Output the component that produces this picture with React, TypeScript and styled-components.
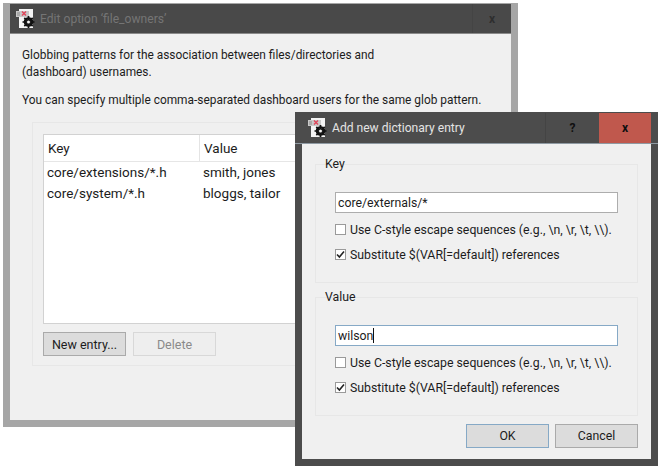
import React from "react";
import styled, { createGlobalStyle } from "styled-components";

const Global = createGlobalStyle`
  html, body { margin: 0; padding: 0; background: #fff; }
  body { width: 662px; height: 468px; overflow: hidden; font-family: Roboto, "Noto Sans", sans-serif; font-size: 12.5px; color: #1c1c1c; }
  #root { position: relative; width: 662px; height: 468px; }
`;

const Window = styled.section<{ $active?: boolean }>`
  position: absolute;
  box-sizing: border-box;
  display: flex;
  flex-direction: column;
  background: #f0f0f0;
  left: ${p => (p.$active ? 295 : 3)}px;
  top: ${p => (p.$active ? 112 : 3)}px;
  width: ${p => (p.$active ? 363 : 515)}px;
  height: ${p => (p.$active ? 354 : 424)}px;
  border: 7px solid ${p => (p.$active ? "#4c4c4c" : "#a6a6a6")};
  border-top-width: 1px;
`;

const TitleBar = styled.header<{ $active?: boolean }>`
  display: flex;
  align-items: center;
  flex: none;
  height: ${p => (p.$active ? 31 : 30)}px;
  margin: 0 ${p => (p.$active ? -7 : 0)}px;
  padding: 0 ${p => (p.$active ? 7 : 0)}px 0 ${p => (p.$active ? 12 : 5)}px;
  background: ${p => (p.$active ? "#4c4c4c" : "#494949")};
  border-bottom: 1px solid ${p => (p.$active ? "#8f9aa3" : "#8a8a8a")};
  box-sizing: border-box;
`;

const TitleText = styled.span<{ $active?: boolean }>`
  flex: 1;
  margin-left: 3px;
  font-size: 12.1px;
  color: ${p => (p.$active ? "#e4e4e4" : "#757575")};
`;

const TitleButton = styled.div<{ $close?: boolean; $dim?: boolean }>`
  width: ${p => (p.$close ? 52 : p.$dim ? 39 : 54)}px;
  height: 100%;
  display: flex;
  align-items: center;
  justify-content: center;
  font-weight: 700;
  font-size: 12px;
  color: ${p => (p.$dim ? "#2e2e2e" : "#0f0f0f")};
  background: ${p => (p.$close ? "#c0584d" : "transparent")};
  border-left: ${p => (p.$close ? "none" : "1px solid #444")};
  box-sizing: border-box;
`;

const BackBody = styled.div`
  flex: 1;
  padding: 13px 12px 0;
  line-height: 17px;
`;

const Para = styled.p`
  margin: 0 0 11px;
  font-size: 11.9px;
  white-space: pre-line;
`;

const ListGroup = styled.div`
  margin: 13px 0 0 10px;
  height: 244px;
  box-sizing: border-box;
  border: 1px solid #e7e7e7;
  padding: 11px 10px 0;
`;

const Table = styled.div`
  height: 190px;
  box-sizing: border-box;
  background: #fff;
  border: 1px solid #d2d2d2;
  border-width: 1px 0 1px 1px;
  font-size: 13.5px;
`;

const HeaderRow = styled.div`
  display: grid;
  grid-template-columns: 156px 1fr;
  height: 27px;
  align-items: center;
  border-bottom: 1px solid #e6e6e6;
  box-sizing: border-box;
`;

const HeaderCell = styled.div<{ $first?: boolean }>`
  height: 100%;
  display: flex;
  align-items: center;
  padding-left: 4px;
  border-right: ${p => (p.$first ? "1px solid #e4e4e4" : "none")};
  box-sizing: border-box;
`;

const Row = styled.div`
  display: grid;
  grid-template-columns: 156px 1fr;
  height: 21px;
  align-items: center;
  &:first-of-type { margin-top: 3px; }
`;

const Cell = styled.div`
  padding-left: 3px;
`;

const ButtonRow = styled.div`
  display: flex;
  gap: 7px;
  margin-top: 8px;
`;

const Button = styled.button<{ $focus?: boolean; $disabled?: boolean }>`
  width: 83px;
  height: 24px;
  padding: 0;
  font: inherit;
  background: ${p => (p.$disabled ? "#eeeeee" : "#dcdcdc")};
  color: ${p => (p.$disabled ? "#8a8a8a" : "#1c1c1c")};
  border: 1px solid ${p => (p.$focus ? "#86a9c6" : p.$disabled ? "#d8d8d8" : "#aaaaaa")};
  box-sizing: border-box;
`;

const FrontBody = styled.div`
  flex: 1;
  display: flex;
  flex-direction: column;
  padding: 20px 13px 0;
  font-size: 12.3px;
`;

const Group = styled.div`
  box-sizing: border-box;
  height: 119px;
  border: 1px solid #e7e7e7;
  padding: 0 19px;
  & + & { margin-top: 14px; }
`;

const Legend = styled.div`
  height: 17px;
  line-height: 17px;
  margin: -9px 0 0 -10px;
`;

const Input = styled.div<{ $focus?: boolean }>`
  display: flex;
  align-items: center;
  box-sizing: border-box;
  height: 21px;
  margin: 19px 0 8px;
  padding-left: 2px;
  background: #fff;
  border: 1px solid ${p => (p.$focus ? "#86a9c6" : "#adadad")};
`;

const Caret = styled.span`
  width: 1px;
  height: 15px;
  background: #111;
`;

const CheckRow = styled.div`
  display: flex;
  align-items: center;
  height: 17px;
  gap: 4px;
  margin-bottom: 8px;
  white-space: nowrap;
`;

const Box = styled.span`
  width: 11px;
  height: 11px;
  flex: none;
  box-sizing: border-box;
  background: #fff;
  border: 1px solid #9a9a9a;
  display: flex;
  align-items: center;
  justify-content: center;
`;

const Actions = styled.div`
  display: flex;
  justify-content: flex-end;
  gap: 6px;
  margin-top: 8px;
`;

const AppIcon = () => (
  <svg width="22" height="22" viewBox="0 0 22 22" style={{ flex: "none" }}>
    <rect x="4" y="1" width="14" height="19" fill="#f4f4f4" />
    <rect x="1" y="3" width="13" height="6" fill="#c9c9c9" />
    <path d="M7 3.5l4 4M11 3.5l-4 4" stroke="#e0455a" strokeWidth="1.4" />
    <path d="M2 5h3M2 7h3" stroke="#8a8a8a" strokeWidth="1" />
    <g transform="translate(13.5 14)">
      <circle r="3.6" fill="none" stroke="#111" strokeWidth="2.4" />
      <path
        d="M0-6V6M-6 0H6M-4.2-4.2L4.2 4.2M-4.2 4.2L4.2-4.2"
        stroke="#111"
        strokeWidth="1.7"
      />
      <circle r="1.5" fill="#f4f4f4" />
    </g>
  </svg>
);

const Check = () => (
  <svg width="9" height="9" viewBox="0 0 9 9">
    <path d="M1 4.5L3.4 7L8 1.5" fill="none" stroke="#222" strokeWidth="1.6" />
  </svg>
);

const Escape = "Use C-style escape sequences (e.g., \\n, \\r, \\t, \\\\).";
const Subst = "Substitute $(VAR[=default]) references";

const Options = () => (
  <>
    <CheckRow>
      <Box />
      {Escape}
    </CheckRow>
    <CheckRow>
      <Box>
        <Check />
      </Box>
      {Subst}
    </CheckRow>
  </>
);

export default function App() {
  return (
    <>
      <Global />
      <Window>
        <TitleBar>
          <AppIcon />
          <TitleText>Edit option ‘file_owners’</TitleText>
          <TitleButton $dim>x</TitleButton>
        </TitleBar>
        <BackBody>
          <Para>{"Globbing patterns for the association between files/directories and\n(dashboard) usernames."}</Para>
          <Para>You can specify multiple comma-separated dashboard users for the same glob pattern.</Para>
          <ListGroup>
            <Table>
              <HeaderRow>
                <HeaderCell $first>Key</HeaderCell>
                <HeaderCell>Value</HeaderCell>
              </HeaderRow>
              <Row>
                <Cell>core/extensions/*.h</Cell>
                <Cell>smith, jones</Cell>
              </Row>
              <Row>
                <Cell>core/system/*.h</Cell>
                <Cell>bloggs, tailor</Cell>
              </Row>
            </Table>
            <ButtonRow>
              <Button>New entry...</Button>
              <Button $disabled>Delete</Button>
            </ButtonRow>
          </ListGroup>
        </BackBody>
      </Window>
      <Window $active>
        <TitleBar $active>
          <AppIcon />
          <TitleText $active>Add new dictionary entry</TitleText>
          <TitleButton>?</TitleButton>
          <TitleButton $close>x</TitleButton>
        </TitleBar>
        <FrontBody>
          <Group>
            <Legend>Key</Legend>
            <Input>core/externals/*</Input>
            <Options />
          </Group>
          <Group>
            <Legend>Value</Legend>
            <Input $focus>
              wilson
              <Caret />
            </Input>
            <Options />
          </Group>
          <Actions>
            <Button $focus>OK</Button>
            <Button>Cancel</Button>
          </Actions>
        </FrontBody>
      </Window>
    </>
  );
}
